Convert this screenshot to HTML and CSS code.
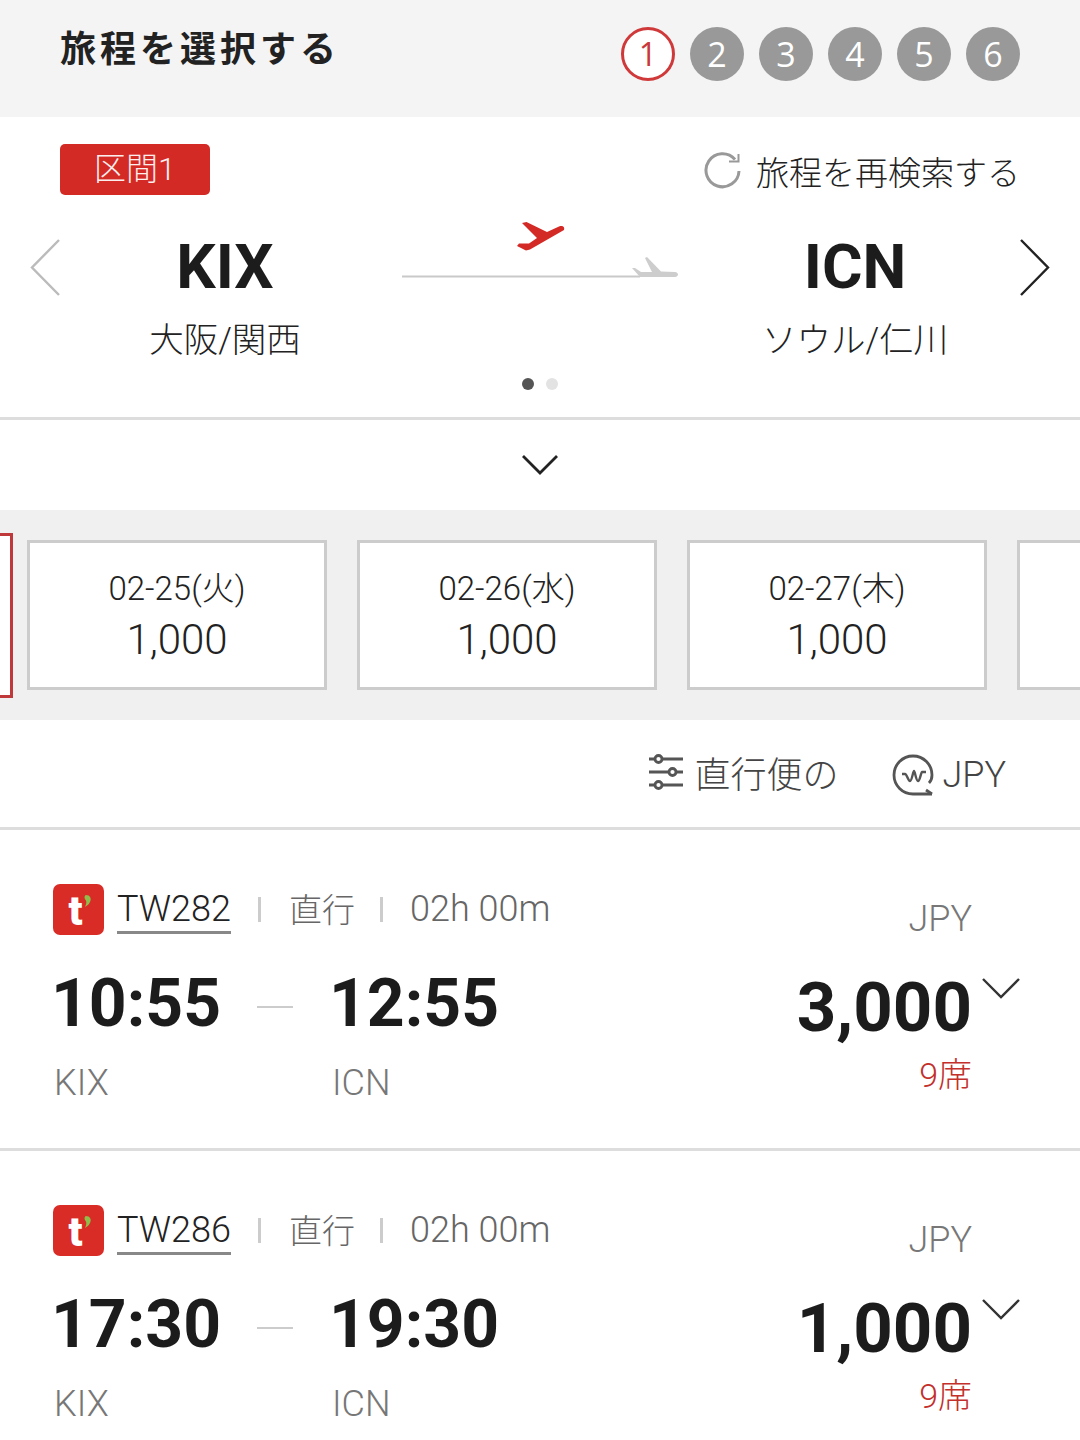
FILE: index.html
```html
<!DOCTYPE html>
<html lang="ja">
<head>
<meta charset="utf-8">
<title>旅程を選択する</title>
<link rel="stylesheet" href="styles.css">
</head>
<body>
<header class="top">
  <h1 class="title">旅程を選択する</h1>
  <ol class="steps">
    <li class="step step-on">1</li>
    <li class="step">2</li>
    <li class="step">3</li>
    <li class="step">4</li>
    <li class="step">5</li>
    <li class="step">6</li>
  </ol>
</header>

<section class="route">
  <div class="route-head">
    <span class="tag">区間1</span>
    <a class="research">
      <svg class="research-icon" viewBox="0 0 38 38" fill="none">
        <path d="M31 7.500A16.500 16.500 0 1 0 35 19" stroke="#999" stroke-width="3"/>
        <path d="M25 9.500H34.500V2" stroke="#999" stroke-width="2"/>
      </svg>
      <span>旅程を再検索する</span>
    </a>
  </div>
  <div class="route-main">
    <svg class="arrow" viewBox="0 0 30 60" fill="none"><path d="M29 2 2 29.500 29 57" stroke="#bbb" stroke-width="2.400"/></svg>
    <div class="port">
      <div class="code">KIX</div>
      <div class="city">大阪/関西</div>
    </div>
    <svg class="flight-line" viewBox="390 215 300 70">
      <path d="M522 223 526.500 222 547 232 559 226.500C563 225 565 227 564 230L530 249.500 526 250.500 517 246 519 243.500 529 243.500 537 238Z" fill="#d32a26"/>
      <path d="M402 276.500H640" stroke="#c9c9c9" stroke-width="2"/>
      <path d="M632 268 635 268 641 272 652 272 645 258 647 257 661 271.500 675 272C679 272.500 679 276.500 675 277H640Z" fill="#cdcdcd"/>
    </svg>
    <div class="port">
      <div class="code">ICN</div>
      <div class="city">ソウル/仁川</div>
    </div>
    <svg class="arrow" viewBox="0 0 30 60" fill="none"><path d="M1 2 28 29.500 1 57" stroke="#222" stroke-width="2.400"/></svg>
  </div>
  <div class="dots"><span class="dot dot-on"></span><span class="dot"></span></div>
</section>

<div class="collapse">
  <svg class="collapse-icon" viewBox="0 0 38 22" fill="none"><path d="M2 2 19 19 36 2" stroke="#222" stroke-width="2.800"/></svg>
</div>

<div class="dates">
  <div class="date date-on"></div>
  <div class="date"><div class="date-day">02-25(火)</div><div class="date-fare">1,000</div></div>
  <div class="date"><div class="date-day">02-26(水)</div><div class="date-fare">1,000</div></div>
  <div class="date"><div class="date-day">02-27(木)</div><div class="date-fare">1,000</div></div>
  <div class="date"></div>
</div>

<div class="tools">
  <span class="tool tool-direct">
    <svg class="tool-icon" viewBox="0 0 36 36" fill="none" stroke="#555" stroke-width="2.800">
      <path d="M1 5H7M14 5H35M1 18H21M28 18H35M1 31H7M14 31H35"/>
      <circle cx="10.500" cy="5" r="3.500"/><circle cx="24.500" cy="18" r="3.500"/><circle cx="10.500" cy="31" r="3.500"/>
    </svg>
    <span>直行便の</span>
  </span>
  <span class="tool tool-currency">
    <svg class="cur-icon" viewBox="0 0 44 42" fill="none" stroke="#555" stroke-width="2.800">
      <path d="M40 40H21A19 19 0 1 1 40 21C40 24 39 27 37 29"/>
      <path d="M34 36 40 40"/>
      <path d="M10 20H13C15 20 16 27 18 27 20 27 21 17 22 17 23 17 24 27 26 27 28 27 29 18 30 18H34" stroke-width="2.400"/>
    </svg>
    <span>JPY</span>
  </span>
</div>

<article class="flight">
  <div class="flight-left">
    <div class="meta">
      <span class="logo"><span class="logo-t">t</span><svg class="logo-leaf" viewBox="0 0 10 14"><path d="M3 0C8 0 10 4 8 8 7 11 4 13 2 14 4 10 4 8 3 6 1 4 1 1 3 0Z" fill="#8fbf4a"/></svg></span>
      <span class="flight-no">TW282</span>
      <span class="sep"></span>
      <span class="muted muted-cjk">直行</span>
      <span class="sep sep-2"></span>
      <span class="muted">02h 00m</span>
    </div>
    <div class="times">
      <span class="time">10:55</span>
      <span class="dash"></span>
      <span class="time">12:55</span>
    </div>
    <div class="airports">
      <span class="airport">KIX</span>
      <span class="airport">ICN</span>
    </div>
  </div>
  <div class="flight-right">
    <div class="fare-box">
      <span class="cur">JPY</span>
      <span class="fare">3,000</span>
      <span class="seats">9席</span>
    </div>
    <svg class="fare-toggle" viewBox="0 0 38 22" fill="none"><path d="M1 2 19 20 37 2" stroke="#333" stroke-width="2.400"/></svg>
  </div>
</article>

<article class="flight">
  <div class="flight-left">
    <div class="meta">
      <span class="logo"><span class="logo-t">t</span><svg class="logo-leaf" viewBox="0 0 10 14"><path d="M3 0C8 0 10 4 8 8 7 11 4 13 2 14 4 10 4 8 3 6 1 4 1 1 3 0Z" fill="#8fbf4a"/></svg></span>
      <span class="flight-no">TW286</span>
      <span class="sep"></span>
      <span class="muted muted-cjk">直行</span>
      <span class="sep sep-2"></span>
      <span class="muted">02h 00m</span>
    </div>
    <div class="times">
      <span class="time">17:30</span>
      <span class="dash"></span>
      <span class="time">19:30</span>
    </div>
    <div class="airports">
      <span class="airport">KIX</span>
      <span class="airport">ICN</span>
    </div>
  </div>
  <div class="flight-right">
    <div class="fare-box">
      <span class="cur">JPY</span>
      <span class="fare">1,000</span>
      <span class="seats">9席</span>
    </div>
    <svg class="fare-toggle" viewBox="0 0 38 22" fill="none"><path d="M1 2 19 20 37 2" stroke="#333" stroke-width="2.400"/></svg>
  </div>
</article>
</body>
</html>
```
FILE: styles.css
```css
* { box-sizing: border-box; }
html, body { margin: 0; padding: 0; }
body {
  width: 1080px;
  height: 1440px;
  overflow: hidden;
  background: #fff;
  color: #222;
  font-family: Roboto, "Noto Sans CJK JP", sans-serif;
}
.top {
  height: 117px;
  background: #f4f4f4;
  display: flex;
  justify-content: space-between;
  padding: 27px 60px 0;
}
.title {
  margin: -3px 0 0;
  font-size: 36px;
  line-height: 44px;
  font-weight: 700;
  letter-spacing: 4px;
  color: #222;
  font-family: "Noto Sans CJK JP", sans-serif;
}
.steps {
  display: flex;
  gap: 15px;
  margin: 0;
  padding: 0;
  list-style: none;
}
.step {
  width: 54px;
  height: 54px;
  border-radius: 50%;
  background: #999;
  color: #fff;
  display: flex;
  align-items: center;
  justify-content: center;
  font: 500 34px/1 "Open Sans", sans-serif;
}
.step-on {
  background: #fff;
  border: 3px solid #d0393a;
  color: #c9393a;
  font-size: 32px;
}
.route {
  height: 303px;
  border-bottom: 3px solid #ddd;
  padding-top: 27px;
}
.route-head {
  display: flex;
  justify-content: space-between;
  align-items: center;
  height: 51px;
  padding: 0 60px;
}
.tag {
  width: 150px;
  height: 51px;
  border-radius: 5px;
  background: #d32a26;
  color: #fdeeee;
  font-size: 32px;
  font-weight: 300;
  line-height: 51px;
  text-align: center;
}
.research {
  display: flex;
  align-items: center;
  gap: 14px;
  font-size: 33px;
  font-weight: 300;
  color: #222;
  margin-top: 3px;
}
.research-icon { width: 38px; height: 38px; }
.route-main {
  display: flex;
  padding: 0 30px;
  margin-top: 36px;
  align-items: flex-start;
}
.arrow { width: 30px; height: 60px; margin-top: 7px; }
.port { width: 330px; text-align: center; }
.code {
  font-size: 62px;
  line-height: 72px;
  font-weight: 700;
  color: #1c1c1c;
}
.city {
  font-size: 34.500px;
  line-height: 52px;
  font-weight: 300;
  color: #222;
  margin-top: 11px;
}
.flight-line { width: 300px; height: 70px; flex: none; margin-top: -16px; }
.dots {
  display: flex;
  justify-content: center;
  gap: 12px;
  margin-top: 12px;
}
.dot { width: 12px; height: 12px; border-radius: 50%; background: #e3e3e3; }
.dot-on { background: #555; }
.collapse {
  height: 90px;
  display: flex;
  align-items: center;
  justify-content: center;
}
.collapse-icon { width: 38px; height: 22px; }
.dates {
  height: 210px;
  background: #f0f0f0;
  display: flex;
  align-items: center;
  gap: 30px;
  overflow: hidden;
}
.date {
  flex: none;
  width: 300px;
  height: 150px;
  border: 3px solid #ccc;
  background: #fff;
  text-align: center;
  padding-top: 24px;
}
.date-on {
  height: 165px;
  margin-left: -287px;
  margin-right: -16px;
  border-color: #c0393a;
}
.date-day { font-size: 33px; line-height: 44px; font-weight: 300; color: #222; }
.date-fare { font-size: 42px; line-height: 52px; font-weight: 350; color: #222; margin-top: 3px; }
.tools {
  height: 110px;
  border-bottom: 3px solid #ddd;
  display: flex;
  justify-content: flex-end;
  align-items: center;
  padding: 0 74px 0 0;
}
.tool {
  display: flex;
  align-items: center;
  font-size: 36px;
  font-weight: 300;
  color: #444;
}
.tool-direct { gap: 10px; margin-right: 54px; margin-top: -3px; }
.tool-currency { gap: 6px; margin-top: 2px; }
.tool-icon { width: 36px; height: 36px; }
.cur-icon { width: 44px; height: 42px; }
.flight {
  height: 321px;
  border-bottom: 3px solid #ddd;
  display: flex;
  justify-content: space-between;
  padding: 54px 60px 0 53px;
}
.meta {
  display: flex;
  align-items: center;
  height: 51px;
}
.logo {
  width: 51px;
  height: 51px;
  border-radius: 7px;
  background: #d92c27;
  margin-right: 13px;
  padding-left: 3px;
  display: flex;
  align-items: center;
  justify-content: center;
  overflow: hidden;
}
.logo-t {
  color: #fff;
  font: 900 41px/1 Roboto, sans-serif;
  margin-top: 4px;
}
.logo-leaf { width: 9px; height: 12px; margin-bottom: 17px; }
.flight-no {
  font-size: 36px;
  line-height: 44px;
  font-weight: 300;
  color: #222;
  border-bottom: 3px solid #888;
  margin-top: 1px;
}
.sep {
  width: 3px;
  height: 25px;
  background: #ccc;
  margin: 0 28px 0 27px;
}
.sep-2 { margin: 0 27px 0 25px; }
.muted {
  font-size: 36px;
  font-weight: 300;
  color: #666;
  margin-top: -2px;
}
.muted-cjk { font-size: 33px; margin-top: -4px; }
.times {
  display: flex;
  align-items: center;
  margin: 27px 0 0 -2px;
}
.time {
  font-size: 66px;
  line-height: 84px;
  font-weight: 700;
  color: #1c1c1c;
  width: 167px;
}
.dash {
  width: 36px;
  height: 2px;
  background: #ccc;
  margin: 6px 36px 0 39px;
}
.airports { display: flex; margin-top: 15px; padding-left: 1px; }
.airport {
  width: 278px;
  font-size: 36px;
  line-height: 44px;
  font-weight: 300;
  color: #777;
}
.flight-right {
  display: flex;
  align-items: flex-start;
}
.fare-box {
  display: flex;
  flex-direction: column;
  align-items: flex-end;
  margin-top: 13px;
  margin-right: 10px;
}
.cur { font-size: 36px; line-height: 44px; font-weight: 300; color: #777; }
.fare {
  font-size: 69px;
  line-height: 80px;
  font-weight: 700;
  color: #1c1c1c;
  margin-top: 27px;
}
.seats {
  font-size: 34px;
  line-height: 48px;
  font-weight: 300;
  color: #c3302c;
  margin-top: 3px;
}
.fare-toggle { width: 38px; height: 22px; margin-top: 93px; }
```
